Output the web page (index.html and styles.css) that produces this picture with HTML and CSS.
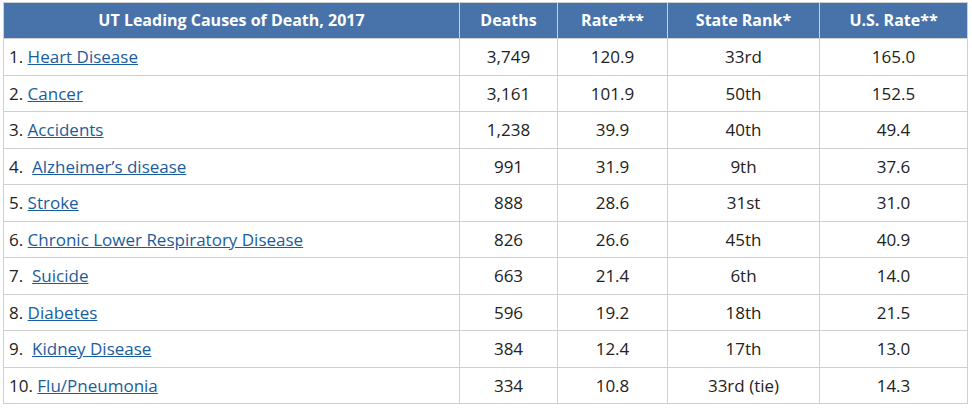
FILE: index.html
```html
<!DOCTYPE html>
<html>
<head>
<meta charset="utf-8">
<link rel="stylesheet" href="styles.css">
</head>
<body>
<table class="causes">
  <colgroup>
    <col class="c-cause"><col class="c-deaths"><col class="c-rate"><col class="c-rank"><col class="c-us">
  </colgroup>
  <thead>
    <tr>
      <th>UT Leading Causes of Death, 2017</th>
      <th>Deaths</th>
      <th>Rate***</th>
      <th>State Rank*</th>
      <th>U.S. Rate**</th>
    </tr>
  </thead>
  <tbody>
    <tr><td class="cause">1. <a href="#">Heart Disease</a></td><td>3,749</td><td>120.9</td><td>33rd</td><td>165.0</td></tr>
    <tr><td class="cause">2. <a href="#">Cancer</a></td><td>3,161</td><td>101.9</td><td>50th</td><td>152.5</td></tr>
    <tr><td class="cause">3. <a href="#">Accidents</a></td><td>1,238</td><td>39.9</td><td>40th</td><td>49.4</td></tr>
    <tr><td class="cause">4. &nbsp;<a href="#">Alzheimer’s disease</a></td><td>991</td><td>31.9</td><td>9th</td><td>37.6</td></tr>
    <tr><td class="cause">5. <a href="#">Stroke</a></td><td>888</td><td>28.6</td><td>31st</td><td>31.0</td></tr>
    <tr><td class="cause">6. <a href="#">Chronic Lower Respiratory Disease</a></td><td>826</td><td>26.6</td><td>45th</td><td>40.9</td></tr>
    <tr><td class="cause">7. &nbsp;<a href="#">Suicide</a></td><td>663</td><td>21.4</td><td>6th</td><td>14.0</td></tr>
    <tr><td class="cause">8. <a href="#">Diabetes</a></td><td>596</td><td>19.2</td><td>18th</td><td>21.5</td></tr>
    <tr><td class="cause">9. &nbsp;<a href="#">Kidney Disease</a></td><td>384</td><td>12.4</td><td>17th</td><td>13.0</td></tr>
    <tr><td class="cause">10. <a href="#">Flu/Pneumonia</a></td><td>334</td><td>10.8</td><td>33rd (tie)</td><td>14.3</td></tr>
  </tbody>
</table>
</body>
</html>
```
FILE: styles.css
```css
html, body {
  margin: 0;
  padding: 0;
  background: #fff;
}
body {
  padding: 2px 0 0 3px;
  font-family: "Open Sans", "Liberation Sans", sans-serif;
  color: #222;
}
.causes {
  border-collapse: collapse;
  width: 964px;
  table-layout: fixed;
  font-size: 17px;
}
.c-cause { width: 456px; }
.c-deaths { width: 98px; }
.c-rate { width: 110px; }
.c-rank { width: 152px; }
.c-us { width: 148px; }
.causes th {
  background: #4773aa;
  color: #fff;
  font-weight: 700;
  font-size: 16px;
  line-height: 21px;
  padding: 7px 6px;
  border: 1px solid #d0d0d0;
  text-align: center;
}
.causes td {
  border: 1px solid #d0d0d0;
  padding: 7px 6px;
  line-height: 21.5px;
  text-align: center;
}
.causes td.cause {
  text-align: left;
  padding-left: 5px;
}
.causes a {
  color: #1a5d9c;
  text-decoration: underline;
}
```
